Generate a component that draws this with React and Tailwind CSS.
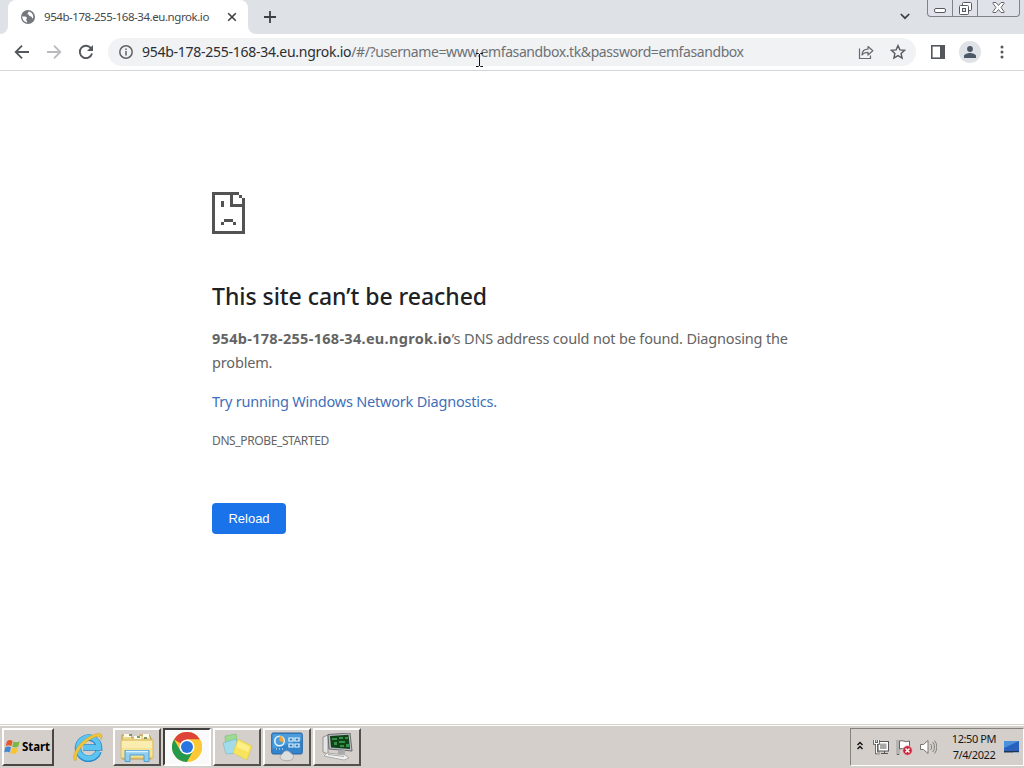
import React from "react";

const SAD_PAGE = [
  "111111111..",
  "1.....1..1.",
  "1.....1...1",
  "1..1..1...1",
  "1..1..11111",
  "1.........1",
  "1.........1",
  "1.........1",
  "1.........1",
  "1...111...1",
  "1..1...1..1",
  "1.........1",
  "1.........1",
  "11111111111",
];

function SadPageIcon() {
  return (
    <svg width="33" height="42" viewBox="0 0 11 14" shapeRendering="crispEdges" fill="#535353">
      {SAD_PAGE.flatMap((row, y) =>
        [...row].map((c, x) => (c === "1" ? <rect key={x + "-" + y} x={x} y={y} width="1" height="1" /> : null))
      )}
    </svg>
  );
}

function WindowControls() {
  return (
    <div className="flex h-[17px] w-[93px] rounded-b-[4px] border border-t-0 border-[#7f8389] bg-[#dfe2e8]">
      <div className="flex w-[25px] items-end justify-center border-r border-[#7f8389] pb-[3px]">
        <svg width="12" height="5" viewBox="0 0 12 5"><rect x=".5" y=".5" width="11" height="4" rx="1.5" fill="#fff" stroke="#555a62" /></svg>
      </div>
      <div className="flex w-[25px] items-end justify-center border-r border-[#7f8389] pb-px">
        <svg width="13" height="13" viewBox="0 0 13 13" fill="#fff" stroke="#555a62">
          <rect x="3.5" y=".5" width="9" height="8" rx="1" /><rect x=".5" y="3.5" width="9" height="9" rx="1" /><rect x="3.5" y="6.5" width="3" height="3" fill="#dfe2e8" />
        </svg>
      </div>
      <div className="flex flex-1 items-end justify-center pb-[3px]">
        <svg width="13" height="11" viewBox="0 0 13 11"><path d="M1 .5h3l2.500 3 2.500-3h3v1l-3 4 3 4v1H9l-2.500-3-2.500 3H1v-1l3-4-3-4z" fill="#fff" stroke="#555a62" strokeWidth=".9" /></svg>
      </div>
    </div>
  );
}

function TabStrip() {
  return (
    <div className="flex h-[34px] bg-[#dee1e6]">
      <div className="flex w-2 items-end bg-white"><div className="h-full w-2 rounded-br-lg bg-[#dee1e6]" /></div>
      <div className="flex w-[240px] items-center rounded-t-lg bg-white pl-[13px]">
        <svg width="14" height="14" viewBox="0 0 14 14">
          <circle cx="7" cy="7" r="7" fill="#74787d" />
          <path d="M1.300 6.300c1.700.5 3.700-.2 4.500 1.200.6 1.200-.9 1.500-.6 2.600.2 1 1.100 1 1 2.300C3.500 12.200 1 9.600 1.300 6.300zM7.200 1.500c1 .7-.7 1.700-.7 2.500 0 1 1.500.3 1.700 1.400.3 1.200 1.500.7 2.300 1.300.7.600.3 1.500 1.500 1.700.7-2.500-.2-6.400-4.800-6.900z" fill="#fff" />
        </svg>
        <span className="ml-[9px] w-[176px] whitespace-nowrap font-['Noto_Sans',sans-serif] text-[11.500px] leading-4 tracking-[-0.44px] text-[#45494d]">954b-178-255-168-34.eu.ngrok.io</span>
        <svg className="ml-[7px]" width="10" height="10" viewBox="0 0 10 10"><path d="M1.200 1.200l7.600 7.600M8.800 1.200L1.200 8.800" stroke="#3c4043" strokeWidth="1.600" /></svg>
      </div>
      <div className="w-2 bg-white"><div className="h-full rounded-bl-lg bg-[#dee1e6]" /></div>
      <div className="flex flex-1 items-center pl-[8px]">
        <svg width="12" height="12" viewBox="0 0 12 12"><path d="M6 0v12M0 6h12" stroke="#3c4043" strokeWidth="1.800" /></svg>
      </div>
      <svg className="mr-[17px] mt-[13px]" width="10" height="7" viewBox="0 0 10 7"><path d="M.8 1l4.200 4.200L9.200 1" fill="none" stroke="#3c4043" strokeWidth="1.700" /></svg>
      <div className="mr-1"><WindowControls /></div>
    </div>
  );
}

function Toolbar() {
  return (
    <div className="flex h-[37px] items-center border-b border-[#d4d6d8] bg-white">
      <svg className="ml-[14px]" width="16" height="16" viewBox="0 0 16 16"><path d="M15 8H2M8 1.700L1.700 8 8 14.300" fill="none" stroke="#54585c" strokeWidth="1.800" /></svg>
      <svg className="ml-4" width="16" height="16" viewBox="0 0 16 16"><path d="M1 8h13M8 1.700L14.300 8 8 14.300" fill="none" stroke="#b9bbbe" strokeWidth="1.800" /></svg>
      <svg className="ml-4" width="16" height="16" viewBox="0 0 16 16"><path d="M13.200 4.500A6.200 6.200 0 1 0 14 9.500" fill="none" stroke="#54585c" strokeWidth="1.900" /><path d="M15 1v6H9z" fill="#54585c" /></svg>
      <div className="ml-[14px] flex h-7 w-[808px] items-center rounded-full bg-[#f0f2f4] pl-[11px]">
        <svg width="14" height="14" viewBox="0 0 14 14"><circle cx="7" cy="7" r="6.200" fill="none" stroke="#5f6368" strokeWidth="1.500" /><path d="M7 6v4.600M7 3.400V5" stroke="#5f6368" strokeWidth="1.500" /></svg>
        <div className="relative ml-[9px] flex-1 whitespace-nowrap font-['Noto_Sans',sans-serif] text-[14px] leading-5 text-[#6d7175]">
          <span className="tracking-[-0.26px] text-[#2b2e31]">954b-178-255-168-34.eu.ngrok.io</span><span className="tracking-[-0.41px]">/#/?username=www.emfasandbox.tk&amp;password=emfasandbox</span>
          <svg className="absolute left-[334px] top-[11px]" width="7" height="14" viewBox="0 0 7 14"><path d="M0 .5h2.500l1 1 1-1H7M3.500 1v12M0 13.500h2.500l1-1 1 1H7" fill="none" stroke="#111" /></svg>
        </div>
        <svg width="16" height="16" viewBox="0 0 16 16" fill="none" stroke="#666a6f" strokeWidth="1.200"><path d="M1.500 4.500v10h11v-3" /><path d="M4 11c.2-4 2.500-5.800 6-5.800V2.500L14.800 6.800 10 11V8.300C7.500 8.200 5.500 9 4 11z" strokeLinejoin="round" /></svg>
        <svg className="ml-4 mr-[10px]" width="16" height="16" viewBox="0 0 16 16"><path d="M8 1.600l1.900 4.300 4.700.4-3.500 3.100 1 4.600L8 11.600 3.900 14l1-4.600L1.400 6.300l4.700-.4z" fill="none" stroke="#575b60" strokeWidth="1.400" /></svg>
      </div>
      <svg className="ml-[15px]" width="14" height="14" viewBox="0 0 14 14"><rect x=".8" y=".8" width="12.400" height="12.400" fill="none" stroke="#54585c" strokeWidth="1.600" /><path d="M9 0h5v14H9z" fill="#54585c" /></svg>
      <div className="ml-[14px] flex size-[22px] items-center justify-center rounded-full bg-[#dfe2e7]">
        <svg width="12" height="12" viewBox="0 0 12 12" fill="#4d5866"><circle cx="6" cy="3" r="2.900" /><path d="M0 12v-2c0-2 4-3 6-3s6 1 6 3v2z" /></svg>
      </div>
      <svg className="ml-[19px]" width="4" height="14" viewBox="0 0 4 14" fill="#54585c"><circle cx="2" cy="2" r="1.500" /><circle cx="2" cy="7" r="1.500" /><circle cx="2" cy="12" r="1.500" /></svg>
    </div>
  );
}

function ErrorPage() {
  return (
    <main className="flex h-[653px] flex-col items-start bg-white pl-[212px] pt-[121px] font-['Noto_Sans',sans-serif] text-[#646464]">
      <SadPageIcon />
      <h1 className="mt-[47px] whitespace-nowrap text-[23px] font-medium leading-[30px] tracking-[-0.04px] text-[#202124]">This site can’t be reached</h1>
      <div className="mt-[15px] whitespace-nowrap text-[14.500px] leading-6 tracking-[-0.17px]">
        <p><strong className="font-bold tracking-[0.3px]">954b-178-255-168-34.eu.ngrok.io</strong><span>’s DNS address could not be found. Diagnosing the</span></p>
        <p>problem.</p>
      </div>
      <a className="mt-[15px] whitespace-nowrap text-[14.500px] leading-6 tracking-[-0.21px] text-[#416fba]">Try running Windows Network Diagnostics.</a>
      <div className="mt-[18px] whitespace-nowrap text-[12px] leading-5 tracking-[-0.38px]">DNS_PROBE_STARTED</div>
      <button className="mt-[52px] h-[31px] w-[74px] rounded bg-[#1a73e8] font-['Liberation_Sans',sans-serif] text-[13px] text-white">Reload</button>
    </main>
  );
}

function TaskButton({ active, children }) {
  return (
    <div className={active
      ? "flex h-[38px] w-[48px] items-center justify-center border-2 border-b-white border-l-[#404040] border-r-white border-t-[#404040] bg-[#fbfafa]"
      : "flex h-[38px] w-[48px] items-center justify-center border-2 border-b-[#55524e] border-l-white border-r-[#55524e] border-t-white bg-[#d4cfca]"}>
      {children}
    </div>
  );
}

function WindowsFlag() {
  return (
    <svg width="17" height="16" viewBox="0 0 17 16">
      <path d="M3 2.200C5 .8 6.800.8 8.600 2L7.300 7.200C5.500 6 3.700 6.100 1.700 7.300z" fill="#e8572b" />
      <path d="M9.500 2.500c2 1.100 4 1 6.200-.2l-1.500 5.300c-2 1.200-4 1.200-6 .1z" fill="#78b843" />
      <path d="M1.400 8.300c2-1.200 3.800-1.200 5.600-.1l-1.400 5.200c-1.800-1.100-3.600-1-5.500.2z" fill="#4289d4" />
      <path d="M7.900 8.700c2 1.100 4 1.100 6 0l-1.400 5.200c-2 1.200-4 1.200-6 0z" fill="#f6c52c" />
    </svg>
  );
}

function ExplorerE() {
  return (
    <svg width="32" height="32" viewBox="0 0 32 32">
      <path d="M26.500 20.500A10.500 10.500 0 1 1 27 16.500H11" fill="none" stroke="#2488cc" strokeWidth="6.500" />
      <path d="M26.300 20.500A10.500 10.500 0 1 1 27 16.500H11" fill="none" stroke="#5cc4f0" strokeWidth="4.800" />
      <path d="M2.500 29.500C-1 24 7 11 17.500 5.500 24 2 30 1.200 30 5.200c0 1.500-.5 2.600-1 3.500 0-3.600-3.200-4.300-9.500-1C10 13 3.500 22.500 4.500 29c-.6.800-1.500.8-2 .5z" fill="#efc63a" stroke="#c8961f" strokeWidth=".4" />
    </svg>
  );
}

function FoldersIcon() {
  return (
    <svg width="34" height="32" viewBox="0 0 34 32">
      <path d="M2 4h8l2 3h8V4h9l2 3v21H2z" fill="#eed68a" stroke="#b99a4b" />
      <path d="M4 3h7v3H4zM14 5h7v3h-7zM23 3h6v4h-6z" fill="#fffbe7" />
      <path d="M9 4h3M17 6h3M24 7h3" stroke="#567c46" strokeWidth="1.500" />
      <path d="M1 9h32v18H1z" fill="#f5e294" stroke="#d3b560" strokeWidth=".8" />
      <path d="M2 10h30v7H2z" fill="#fbedb0" />
      <path d="M5 30.500V19.500h24v11h-5V24H10v6.500z" fill="#91cdf0" stroke="#4e9fce" />
      <path d="M6 20.500h22" stroke="#daf1ff" strokeWidth="1.500" />
    </svg>
  );
}

function ChromeIcon() {
  return (
    <svg width="30" height="30" viewBox="0 0 30 30">
      <circle cx="15" cy="15" r="15" fill="#fcc934" />
      <path d="M15 15L2 7.500A15 15 0 0 1 28 7.500H15z" fill="#dd4336" />
      <path d="M2 7.500A15 15 0 0 0 15 30l6.500-11.250L15 15 8.500 18.750z" fill="#26994c" />
      <path d="M15 30A15 15 0 0 0 28 7.500H15l6.500 11.250z" fill="#fcc934" />
      <circle cx="15" cy="15" r="7.500" fill="#fff" />
      <circle cx="15" cy="15" r="6" fill="#2875df" />
    </svg>
  );
}

function NotesIcon() {
  return (
    <svg width="32" height="30" viewBox="0 0 32 30">
      <path d="M4 4l11-2 2 12-12 4z" fill="#9bdc92" stroke="#77bc7a" strokeWidth=".6" />
      <path d="M2 11l13-4 4 14-14 1z" fill="#a3dbe8" stroke="#77b5cc" strokeWidth=".6" />
      <path d="M17 7l14 7-5 14-14-7z" fill="#f7e35c" stroke="#dcc752" strokeWidth=".6" />
      <path d="M17.500 9l11.500 6-2 5-11.500-5z" fill="#fdf088" />
    </svg>
  );
}

function ControlPanelIcon() {
  return (
    <svg width="32" height="30" viewBox="0 0 32 30">
      <rect x=".7" y="1" width="30.600" height="21" rx="1.500" fill="#3484cc" stroke="#2764a3" />
      <path d="M1.500 2h29v6l-29 9z" fill="#4a9cda" />
      <circle cx="8.500" cy="9" r="4.700" fill="none" stroke="#e6f7ff" strokeWidth="1.600" />
      <path d="M8.500 9V3.500a5.500 5.500 0 0 1 4 7z" fill="#f4a534" />
      <path d="M18 6h4v3h-4zM24 6h4v3h-4zM18 12h4v3h-4zM24 12h4v3h-4z" fill="#3279bd" stroke="#e6f7ff" strokeWidth="1.200" />
      <path d="M5 17h1M8 17h1M11 17h1" stroke="#fff" />
      <path d="M9 25c0-2 2-2 3-4 1-2 3-2.500 5-2 2 .6 2 2 4 3 2 1.200 2 4 0 5.500-3 2.200-12 1.500-12-2.500z" fill="#ddd" stroke="#999" strokeWidth=".7" />
    </svg>
  );
}

function MonitorIcon() {
  return (
    <svg width="32" height="28" viewBox="0 0 32 28">
      <path d="M2 4l5-2v19l-5-2z" fill="#e4e4e4" stroke="#777" strokeWidth=".7" />
      <path d="M7 1.500L29 0l2 18-23-2z" fill="#b8bec4" stroke="#555" strokeWidth=".8" />
      <path d="M9 3l18.500-1.300L29 16 10 14.500z" fill="#0f4218" />
      <path d="M11 5h5v2h-5zM18 4h4v2h-4zM13 9h3v3h-3zM18 8h6v2h-6zM24 4h3v2h-3zM19 12h4v2h-4zM25 11h3v3h-3z" fill="#359244" />
      <path d="M17 17h7v4h-7z" fill="#aaa" />
      <path d="M6 20l18 2 4 3-5 2L3 23z" fill="#f2f2f2" stroke="#888" strokeWidth=".6" />
      <path d="M7 21.500l16 2" stroke="#aaa" />
    </svg>
  );
}

function Tray() {
  return (
    <div className="flex h-[38px] w-[174px] items-center border border-b-white border-l-[#85817b] border-r-white border-t-[#85817b]">
      <svg className="ml-[6px] -mt-1" width="6" height="9" viewBox="0 0 6 9"><path d="M.5 4L3 1.500 5.500 4M.5 8L3 5.500 5.500 8" fill="none" stroke="#111" strokeWidth="1.400" /></svg>
      <svg className="ml-[10px]" width="16" height="16" viewBox="0 0 16 16">
        <rect x="5" y="2.500" width="10.500" height="9.500" fill="#fff" stroke="#555" /><rect x="7" y="4.500" width="6.500" height="5.500" fill="#aaa8a5" /><path d="M8 14.500h7M11.500 12v2" stroke="#555" />
        <path d="M1.500 1v3.500h4V1M3.500 4.500V14h3.500" fill="none" stroke="#555" strokeWidth="2.600" /><path d="M1.500 1v3.500h4V1M3.500 4.500V14h3.500" fill="none" stroke="#fff" />
      </svg>
      <svg className="ml-[7px]" width="17" height="17" viewBox="0 0 17 17">
        <path d="M2 1v15" stroke="#666" strokeWidth="2.500" /><path d="M2 1v14" stroke="#fff" /><path d="M3.500 2c4-1.500 5 2 10 0v7.500c-5 2-6-1-10 .5z" fill="#fff" stroke="#666" />
        <circle cx="11.500" cy="11.500" r="4.700" fill="#c9263b" stroke="#f0b6bd" strokeWidth=".7" /><path d="M9.500 9.500l4 4M13.500 9.500l-4 4" stroke="#fff" strokeWidth="1.500" />
      </svg>
      <svg className="ml-[7px]" width="17" height="16" viewBox="0 0 17 16" fill="none" stroke="#777572"><path d="M.5 5.500h3L8 1.500v13l-4.500-4h-3z" fill="#fff" /><path d="M10.500 5c1.500 1.500 1.500 4.500 0 6M12.500 3c2.600 2.500 2.600 7.500 0 10M14.500 1.500c3 3.500 3 9.500 0 13" strokeWidth=".9" /></svg>
      <div className="ml-[11px] w-[52px] whitespace-nowrap text-center font-['Noto_Sans',sans-serif] text-[11px] leading-4 tracking-[-0.4px] text-[#161616]">
        <div>12:50 PM</div><div>7/4/2022</div>
      </div>
      <svg className="ml-[4px] mt-[2px]" width="15" height="14" viewBox="0 0 15 14"><path d="M0 0h15v10H0z" fill="#2860bd" /><path d="M0 0h15L0 7z" fill="#4a91dc" /><path d="M0 10h15v1.500H0z" fill="#20324f" /><path d="M9 11.500h6V14H9z" fill="#c9d0d7" /></svg>
    </div>
  );
}

function Taskbar() {
  return (
    <div className="h-[44px] border-t border-[#d5d2cc] bg-[#d4cfca]">
      <div className="flex h-[43px] items-start border-t border-white pt-[2px]">
        <div className="ml-[2px] flex h-[38px] w-[52px] items-center border-2 border-b-[#494643] border-l-white border-r-[#494643] border-t-white">
          <WindowsFlag />
          <span className="ml-px whitespace-nowrap font-['Noto_Sans',sans-serif] text-[11.500px] font-bold leading-4 tracking-[-0.1px] text-black">Start</span>
        </div>
        <div className="ml-[18px] pt-[3px]"><ExplorerE /></div>
        <div className="ml-[9px] flex gap-[2px]">
          <TaskButton><FoldersIcon /></TaskButton>
          <TaskButton active><ChromeIcon /></TaskButton>
          <TaskButton><NotesIcon /></TaskButton>
          <TaskButton><ControlPanelIcon /></TaskButton>
          <TaskButton><MonitorIcon /></TaskButton>
        </div>
        <div className="ml-auto"><Tray /></div>
      </div>
    </div>
  );
}

export default function App() {
  return (
    <div className="h-[768px] w-[1024px] overflow-hidden bg-white">
      <TabStrip />
      <Toolbar />
      <ErrorPage />
      <Taskbar />
    </div>
  );
}
